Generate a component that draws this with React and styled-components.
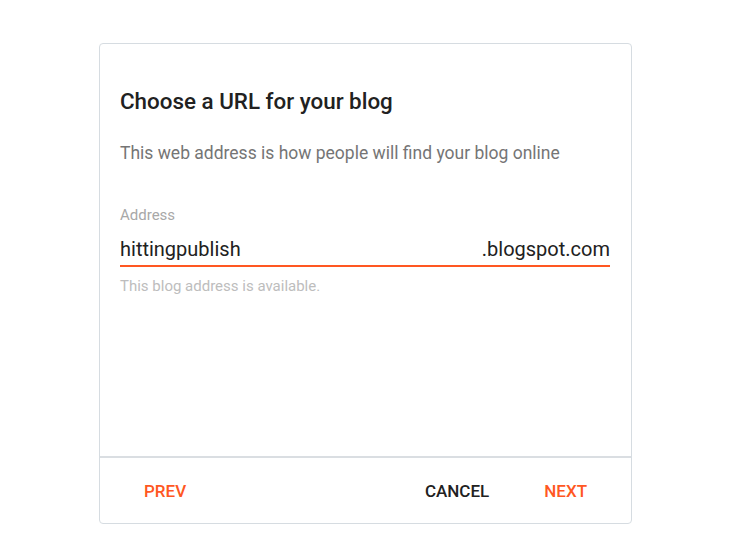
import React, { useState } from "react";
import styled, { createGlobalStyle } from "styled-components";

const GlobalStyle = createGlobalStyle`
  html, body {
    margin: 0;
    padding: 0;
    background: #fff;
    font-family: Roboto, "Liberation Sans", sans-serif;
  }
`;

const Page = styled.div`
  padding: 43px 0 0 99px;
`;

const Card = styled.div`
  width: 531px;
  height: 479px;
  border: 1px solid #d6dce1;
  border-radius: 4px;
  display: flex;
  flex-direction: column;
  background: #fff;
`;

const Body = styled.div`
  flex: 1;
  padding: 44px 21px 0 20px;
`;

const Title = styled.h2`
  margin: 0;
  font-size: 22.4px;
  line-height: 26px;
  font-weight: 500;
  color: #212121;
`;

const Subtitle = styled.p`
  margin: 28px 0 0;
  font-size: 17.5px;
  line-height: 22px;
  color: #757575;
`;

const Field = styled.div`
  margin-top: 42px;
`;

const Label = styled.label`
  display: block;
  font-size: 15px;
  line-height: 18px;
  color: #a8a8a8;
`;

const InputRow = styled.div`
  display: flex;
  align-items: baseline;
  margin-top: 12px;
  border-bottom: 2px solid #ff5722;
  padding-bottom: 3px;
`;

const Input = styled.input`
  flex: 1;
  min-width: 0;
  border: none;
  outline: none;
  padding: 0;
  font-family: inherit;
  font-size: 20px;
  line-height: 26px;
  color: #212121;
  background: transparent;
`;

const Suffix = styled.span`
  font-size: 20px;
  line-height: 26px;
  color: #212121;
`;

const Helper = styled.div`
  margin-top: 10px;
  font-size: 15px;
  line-height: 18px;
  color: #bdbdbd;
`;

const Footer = styled.div`
  height: 65px;
  border-top: 2px solid #dadee2;
  display: flex;
  align-items: center;
  padding: 0 21px;
`;

const Spacer = styled.div`
  flex: 1;
`;

const Button = styled.button`
  border: none;
  background: none;
  padding: 0 23px;
  height: 36px;
  font-family: inherit;
  font-size: 17px;
  font-weight: 500;
  text-transform: uppercase;
  color: ${(p) => (p.$accent ? "#ff5722" : "#212121")};
  cursor: pointer;
  & + & {
    margin-left: 9px;
  }
`;

export default function App() {
  const [value, setValue] = useState("hittingpublish");
  return (
    <Page>
      <GlobalStyle />
      <Card>
        <Body>
          <Title>Choose a URL for your blog</Title>
          <Subtitle>This web address is how people will find your blog online</Subtitle>
          <Field>
            <Label>Address</Label>
            <InputRow>
              <Input value={value} onChange={(e) => setValue(e.target.value)} />
              <Suffix>.blogspot.com</Suffix>
            </InputRow>
            <Helper>This blog address is available.</Helper>
          </Field>
        </Body>
        <Footer>
          <Button $accent>Prev</Button>
          <Spacer />
          <Button>Cancel</Button>
          <Button $accent>Next</Button>
        </Footer>
      </Card>
    </Page>
  );
}
